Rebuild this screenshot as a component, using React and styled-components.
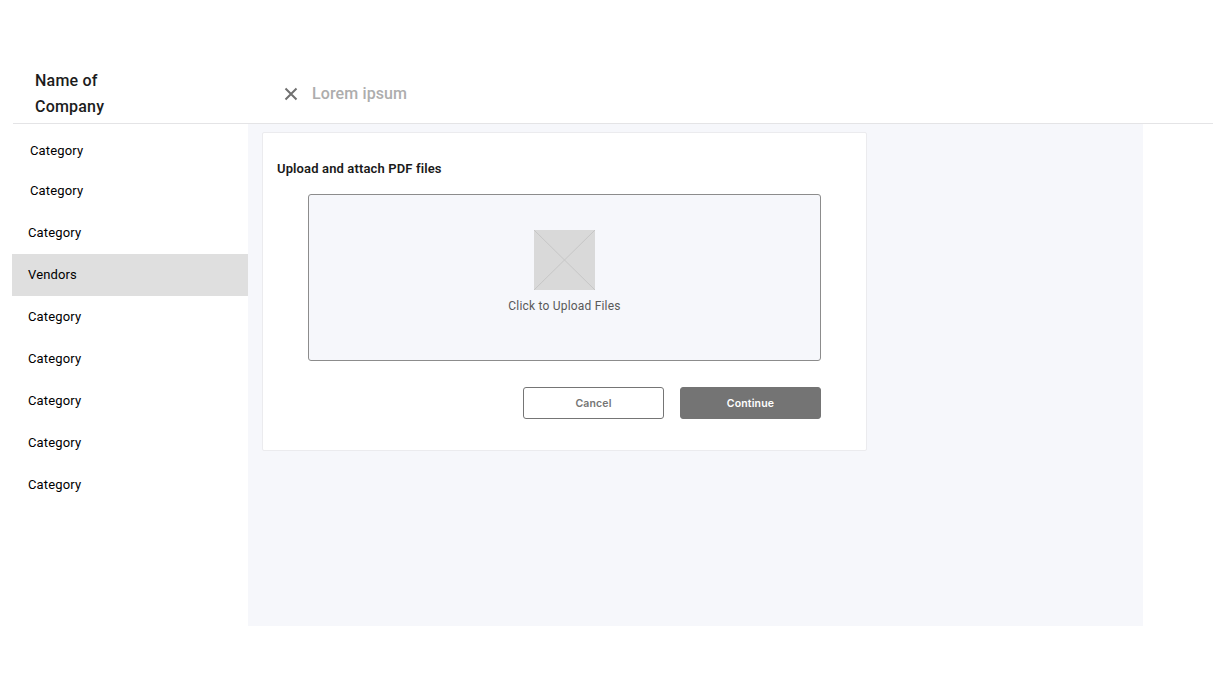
import styled, { createGlobalStyle } from "styled-components";

const GlobalStyle = createGlobalStyle`
  body {
    margin: 0;
    background: #fff;
    font-family: Roboto, "Liberation Sans", sans-serif;
    color: #111;
  }
`;

const Page = styled.div`
  width: 1228px;
  height: 693px;
  padding-top: 68px;
  box-sizing: border-box;
  overflow: hidden;
`;

const Header = styled.header`
  display: flex;
  align-items: center;
  width: 1200px;
  height: 56px;
  margin-left: 13px;
  padding-bottom: 4px;
  box-sizing: border-box;
  border-bottom: 1px solid #e4e4e6;
`;

const Brand = styled.div`
  width: 272px;
  padding-left: 22px;
  box-sizing: border-box;
  font-size: 16px;
  font-weight: 500;
  line-height: 26px;
  letter-spacing: 0.2px;
  color: #1c1c1c;
`;

const CloseButton = styled.button`
  display: flex;
  padding: 0;
  margin-left: -1px;
  margin-right: 14px;
  border: 0;
  background: none;
  color: #707070;
`;

const HeaderTitle = styled.span`
  font-size: 16px;
  font-weight: 500;
  letter-spacing: 0.12px;
  color: #adadad;
`;

const Body = styled.div`
  display: flex;
  height: 502px;
  margin-left: 12px;
`;

const Sidebar = styled.nav`
  display: flex;
  flex-direction: column;
  width: 236px;
  padding-top: 6px;
  box-sizing: border-box;
`;

const NavItem = styled.a`
  display: flex;
  align-items: center;
  height: ${(p) => (p.$top ? "40px" : "42px")};
  padding-left: ${(p) => (p.$top ? "18px" : "16px")};
  padding-bottom: ${(p) => (p.$top ? "0" : "2px")};
  box-sizing: border-box;
  background: ${(p) => (p.$active ? "#dfdfdf" : "transparent")};
  font-size: 13px;
  font-weight: 400;
  letter-spacing: 0.15px;
  color: #000;
`;

const NavGap = styled.div`
  height: 2px;
  flex: none;
`;

const Main = styled.main`
  width: 895px;
  padding: 8px 14px;
  box-sizing: border-box;
  background: #f6f7fb;
`;

const Card = styled.section`
  width: 605px;
  height: 319px;
  padding: 28px 45px 0 14px;
  box-sizing: border-box;
  background: #fff;
  border: 1px solid #ebebee;
  border-radius: 2px;
`;

const CardTitle = styled.h2`
  margin: 0 0 17px;
  font-size: 13px;
  line-height: 16px;
  font-weight: 600;
  letter-spacing: 0.13px;
  color: #1a1a1a;
`;

const Content = styled.div`
  margin-left: 31px;
`;

const DropZone = styled.div`
  display: flex;
  flex-direction: column;
  align-items: center;
  height: 167px;
  padding-top: 35px;
  box-sizing: border-box;
  background: #f6f7fb;
  border: 1px solid #8c8c8c;
  border-radius: 3px;
`;

const Placeholder = styled.svg`
  display: block;
  width: 61px;
  height: 60px;
  margin-bottom: 7px;
`;

const DropText = styled.span`
  font-size: 12px;
  line-height: 18px;
  letter-spacing: 0.2px;
  color: #595959;
`;

const Actions = styled.div`
  display: flex;
  justify-content: flex-end;
  gap: 16px;
  margin-top: 26px;
`;

const Action = styled.button`
  width: 141px;
  height: 32px;
  padding: 0;
  box-sizing: border-box;
  border: 1px solid ${(p) => (p.$primary ? "#747474" : "#757575")};
  border-radius: 3px;
  background: ${(p) => (p.$primary ? "#747474" : "#fff")};
  color: ${(p) => (p.$primary ? "#fff" : "#757575")};
  font-family: Inter, Roboto, sans-serif;
  font-size: 10.5px;
  font-weight: 600;
  letter-spacing: 0.15px;
`;

const CloseIcon = () => (
  <svg width="14" height="14" viewBox="0 0 14 14" fill="none" stroke="currentColor" strokeWidth="2">
    <path d="M1.5 1.5 12.5 12.5M12.5 1.5 1.5 12.5" />
  </svg>
);

const categories = ["Category", "Category", "Category", "Vendors", "Category", "Category", "Category", "Category", "Category"];

export default function App() {
  return (
    <Page>
      <GlobalStyle />
      <Header>
        <Brand>Name of<br />Company</Brand>
        <CloseButton><CloseIcon /></CloseButton>
        <HeaderTitle>Lorem ipsum</HeaderTitle>
      </Header>
      <Body>
        <Sidebar>
          {categories.map((name, i) => (
            <NavItem key={i} $top={i < 2} $active={name === "Vendors"}>{name}</NavItem>
          )).flatMap((el, i) => (i === 1 ? [el, <NavGap key="gap" />] : [el]))}
        </Sidebar>
        <Main>
          <Card>
            <CardTitle>Upload and attach PDF files</CardTitle>
            <Content>
              <DropZone>
                <Placeholder viewBox="0 0 61 60">
                  <rect width="61" height="60" fill="#d9d9d9" />
                  <path d="M0 0 61 60M61 0 0 60" stroke="#c6c6c6" strokeWidth="1" fill="none" />
                </Placeholder>
                <DropText>Click to Upload Files</DropText>
              </DropZone>
              <Actions>
                <Action>Cancel</Action>
                <Action $primary>Continue</Action>
              </Actions>
            </Content>
          </Card>
        </Main>
      </Body>
    </Page>
  );
}
